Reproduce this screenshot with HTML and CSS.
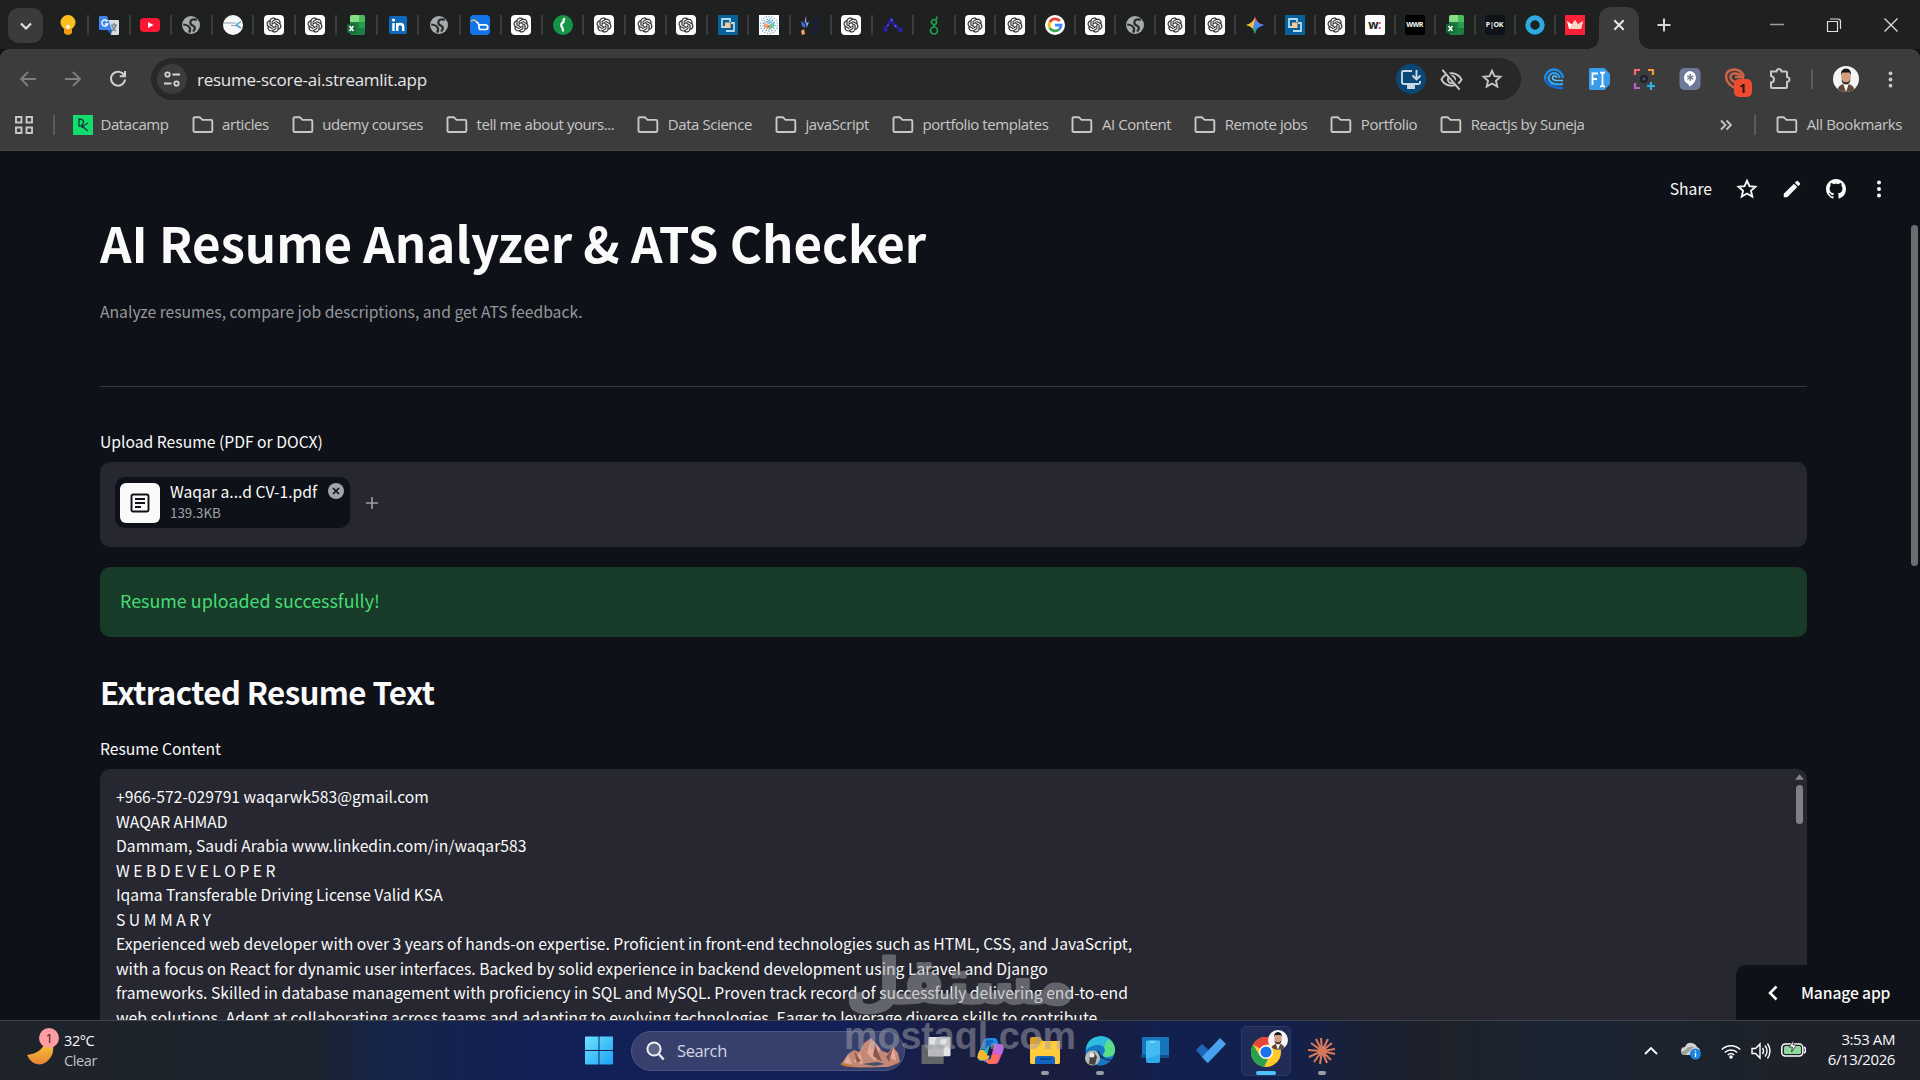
FILE: index.html
```html
<!DOCTYPE html>
<html lang="en">
<head>
<meta charset="utf-8">
<title>AI Resume Analyzer</title>
<link rel="stylesheet" href="styles.css">
</head>
<body>
<svg class="defs" width="0" height="0" aria-hidden="true">
  <defs>
    <symbol id="gpt" viewBox="0 0 20 20"><rect width="20" height="20" rx="4" fill="#fff"/><path transform="translate(2.6 2.6) scale(.617)" fill="#222" stroke="#222" stroke-width=".3" d="M22.2819 9.8211a5.9847 5.9847 0 0 0-.5157-4.9108 6.0462 6.0462 0 0 0-6.5098-2.9A6.0651 6.0651 0 0 0 4.9807 4.1818a5.9847 5.9847 0 0 0-3.9977 2.9 6.0462 6.0462 0 0 0 .7427 7.0966 5.98 5.98 0 0 0 .511 4.9107 6.051 6.051 0 0 0 6.5146 2.9001A5.9847 5.9847 0 0 0 13.2599 24a6.0557 6.0557 0 0 0 5.7718-4.2058 5.9894 5.9894 0 0 0 3.9977-2.9001 6.0557 6.0557 0 0 0-.7475-7.0729zm-9.022 12.6081a4.4755 4.4755 0 0 1-2.8764-1.0408l.1419-.0804 4.7783-2.7582a.7948.7948 0 0 0 .3927-.6813v-6.7369l2.02 1.1686a.071.071 0 0 1 .038.052v5.5826a4.504 4.504 0 0 1-4.4945 4.4944zm-9.6607-4.1254a4.4708 4.4708 0 0 1-.5346-3.0137l.142.0852 4.783 2.7582a.7712.7712 0 0 0 .7806 0l5.8428-3.3685v2.3324a.0804.0804 0 0 1-.0332.0615L9.74 19.9502a4.4992 4.4992 0 0 1-6.1408-1.6464zM2.3408 7.8956a4.485 4.485 0 0 1 2.3655-1.9728V11.6a.7664.7664 0 0 0 .3879.6765l5.8144 3.3543-2.0201 1.1685a.0757.0757 0 0 1-.071 0l-4.8303-2.7865A4.504 4.504 0 0 1 2.3408 7.872zm16.5963 3.8558L13.1038 8.364 15.1192 7.2a.0757.0757 0 0 1 .071 0l4.8303 2.7913a4.4944 4.4944 0 0 1-.6765 8.1042v-5.6772a.79.79 0 0 0-.407-.667zm2.0107-3.0231l-.142-.0852-4.7735-2.7818a.7759.7759 0 0 0-.7854 0L9.409 9.2297V6.8974a.0662.0662 0 0 1 .0284-.0615l4.8303-2.7866a4.4992 4.4992 0 0 1 6.6802 4.66zM8.3065 12.863l-2.02-1.1638a.0804.0804 0 0 1-.038-.0567V6.0742a4.4992 4.4992 0 0 1 7.3757-3.4537l-.142.0805L8.704 5.459a.7948.7948 0 0 0-.3927.6813zm1.0976-2.3654l2.602-1.4998 2.6069 1.4998v2.9994l-2.5974 1.4997-2.6067-1.4997Z"/></symbol>
    <symbol id="globe" viewBox="0 0 20 20"><circle cx="10" cy="10" r="9" fill="#a8abad"/><path d="M16 4.800Q10.500 3.500 9.500 6.500t3 4.500q3 2-.5 5.500M2.200 9.500Q7 10 8.500 12.500t-.5 5" fill="none" stroke="#2a2c2b" stroke-width="2.200"/></symbol>
    <symbol id="excel" viewBox="0 0 20 20"><rect x="4" y="0" width="15" height="20" rx="2" fill="#1b7f42"/><path d="M6 0h7v7H4V2q0-2 2-2" fill="#86dd84"/><path d="M13 0h4q2 0 2 2v5h-6z" fill="#4cbb5e"/><path d="M13 7h6v6h-6z" fill="#269c4d"/><rect x="1" y="9" width="9" height="9" rx="1.500" fill="#146b35"/><path d="M3.500 11l4 5m0-5l-4 5" stroke="#fff" stroke-width="1.600"/></symbol>
    <symbol id="squares" viewBox="0 0 20 20"><rect width="20" height="20" fill="#07629c"/><path d="M9 12H4V4h8v3M8 16h8V8h-3" fill="none" stroke="#b5d9ed" stroke-width="1.800"/><rect x="7" y="7.500" width="5.500" height="5.500" fill="#ffc894"/></symbol>
    <symbol id="folder" viewBox="0 0 22 18"><path d="M1.500 14.500V2.500q0-1.300 1.300-1.300h5l2.700 2.700h8.500q1.300 0 1.300 1.300v9.500q0 1.300-1.300 1.300H2.800q-1.300 0-1.300-1.500z" fill="none" stroke="#c7c7c7" stroke-width="1.900"/></symbol>
    <symbol id="star" viewBox="0 0 24 24"><path d="M12 3l2.700 6 6.500.6-4.900 4.300 1.500 6.400-5.800-3.400-5.800 3.400 1.500-6.400L2.800 9.600l6.500-.6z" fill="none" stroke="currentColor" stroke-width="2" stroke-linejoin="miter"/></symbol>
    <symbol id="dots" viewBox="0 0 20 20"><g fill="currentColor"><circle cx="10" cy="3.500" r="2"/><circle cx="10" cy="10" r="2"/><circle cx="10" cy="16.500" r="2"/></g></symbol>
    <symbol id="face" viewBox="0 0 26 26"><clipPath id="fc"><circle cx="13" cy="13" r="13"/></clipPath><g clip-path="url(#fc)"><rect width="26" height="26" fill="#f5f5f3"/><path d="M4 27q0-8 7-9h4q7 1 7 9z" fill="#62483b"/><path d="M10 17l3 9 3-9z" fill="#fff"/><ellipse cx="13" cy="11" rx="4.800" ry="6.500" fill="#cf9e7d"/><path d="M8 9q-.5-6 5-6.500 5.500.5 5 6.500l-1.500-2.500h-7z" fill="#17171b"/><path d="M8.500 13.500q.5 5 4.500 5t4.500-5q-1.500 2.800-4.500 2.800t-4.500-2.800" fill="#382a28"/></g></symbol>
  </defs>
</svg>

<header class="tabstrip">
  <button class="tab-search"><svg width="14" height="14" viewBox="0 0 14 14"><path d="M2 4.500l5 5 5-5" fill="none" stroke="#e3e3e3" stroke-width="2.200"/></svg></button>
  <div class="tabs wide">
    <i><svg viewBox="0 0 20 20"><path d="M10 0a7.500 7.500 0 0 1 7.500 7.500c0 3-2 4.500-3.500 6.500H6C4.500 12 2.500 10.500 2.500 7.500A7.500 7.500 0 0 1 10 0" fill="#fcc01e"/><path d="M6 13h8v5q-4 4-8 0z" fill="#f39a12"/><circle cx="10" cy="12" r="2.200" fill="#fff4c4"/></svg></i>
    <i><svg viewBox="0 0 20 20"><path d="M8 5h11q1 0 1 1v13q0 1-1 1h-7z" fill="#d9dce1"/><path d="M1 1h7l5 14H1q-1 0-1-1V2q0-1 1-1" fill="#3f86ec"/><path d="M8 15h5l-1 5z" fill="#2756aa"/><path d="M8.500 6.500a3 3 0 1 0 .2 2.500H6" fill="none" stroke="#fff" stroke-width="1.300"/><path d="M12 10h6m-3-2v2m2 0q-1 4-4 6m0-5q2 4 4 5" fill="none" stroke="#6b7483" stroke-width="1.200"/></svg></i>
    <i><svg viewBox="0 0 20 20"><rect y="3" width="20" height="14" rx="4" fill="#ff1633"/><path d="M8 7l5.500 3L8 13z" fill="#fff"/></svg></i>
    <i><svg><use href="#globe"/></svg></i>
    <i><svg viewBox="0 0 20 20"><circle cx="10" cy="10" r="10" fill="#f6f8fa"/><path d="M1 8h12M8 10.500h5" stroke="#8da2b5" stroke-width="1.200"/><path d="M13 10l5-3.500m-5 3.500l5 3" stroke="#4a9fc9" stroke-width="1.500"/></svg></i>
    <i><svg><use href="#gpt"/></svg></i>
    <i><svg><use href="#gpt"/></svg></i>
    <i><svg><use href="#excel"/></svg></i>
    <i><svg viewBox="0 0 20 20"><rect x="1" y="1" width="18" height="18" rx="2" fill="#1268b8"/><path d="M5.500 8v8M9.200 16V8m0 4q0-3 3-3t3 3v4" stroke="#fff" stroke-width="2.400" fill="none"/><circle cx="5.500" cy="5" r="1.600" fill="#fff"/></svg></i>
    <i><svg><use href="#globe"/></svg></i>
    <i><svg viewBox="0 0 20 20"><rect width="20" height="20" rx="4" fill="#1273eb"/><path d="M1 6.500q3-3 5 0" fill="none" stroke="#e7c35f" stroke-width="1.500"/><path d="M6 6.500q2.500 1 3 4v2q0 2 2 2h4.500a2.300 2.300 0 0 0 0-4.600H9" fill="none" stroke="#fff" stroke-width="1.700"/></svg></i>
    <i><svg><use href="#gpt"/></svg></i>
    <i><svg viewBox="0 0 20 20"><circle cx="10" cy="10" r="10" fill="#159447"/><path d="M12 3.500q-2 1-1.500 3.500-3 1.500-2 4.500 2 2 1.500 5" fill="none" stroke="#fff" stroke-width="2.200"/></svg></i>
    <i><svg><use href="#gpt"/></svg></i>
    <i><svg><use href="#gpt"/></svg></i>
    <i><svg><use href="#gpt"/></svg></i>
    <i><svg><use href="#squares"/></svg></i>
    <i><svg viewBox="0 0 20 20"><rect width="20" height="20" fill="#fff"/><g fill="none" stroke-width="1.300" stroke-dasharray="1.300 1.500"><circle cx="10" cy="10" r="8.500" stroke="#7aa9cf"/><circle cx="10" cy="10" r="6" stroke="#5b98c5"/></g><path d="M9.500 10L5 7v5l4.500 3z" fill="#f2a27c"/><path d="M10 10l5-3v5l-5 3z" fill="#6fcb90"/><path d="M6 7l4-2.500L14.500 7 10 9.500z" fill="#8fc4e6"/><path d="M8.500 10.500h2v2h-2z" fill="#e54a4a"/></svg></i>
    <i><svg viewBox="0 0 20 20"><path d="M6 0l-1.500 7 2 2z" fill="#8a90d8"/><path d="M1 6l4 3v4l-3-2z" fill="#466dea"/><path d="M6 8l3-1-2.500 6z" fill="#66c5e8"/><path d="M4 14l1 5-3 1-1-4z" fill="#f4a57a"/><path d="M11 4h8M11 8h8M11 13h8M11 17h8" stroke="#181e3c" stroke-width="2.500"/></svg></i>
    <i><svg><use href="#gpt"/></svg></i>
    <i><svg viewBox="0 0 20 20"><path d="M2 14.500L8 5l4 6 6 4" stroke="#2720ab" stroke-width="2.400" fill="none"/><g fill="#2720ab"><circle cx="2.500" cy="14.500" r="2.200"/><circle cx="8.500" cy="5" r="2.300"/><circle cx="12.500" cy="11" r="2.100"/><circle cx="17.500" cy="15" r="2.300"/></g><g fill="#8f8cf0"><circle cx="5" cy="10.500" r=".7"/><circle cx="8.500" cy="5" r=".8"/><circle cx="12.500" cy="11" r=".7"/></g></svg></i>
    <i><svg viewBox="0 0 20 20"><g fill="none" stroke="#18a252" stroke-width="1.700"><circle cx="10" cy="7" r="2.500"/><circle cx="10" cy="15.500" r="3.500"/><path d="M11.500 5q1.500-1 1.500-3.500M10 9.500V12"/></g></svg></i>
  </div>
  <div class="tabs narrow">
    <i><svg><use href="#gpt"/></svg></i>
    <i><svg><use href="#gpt"/></svg></i>
    <i><svg viewBox="0 0 20 20"><circle cx="10" cy="10" r="10" fill="#fff"/><g fill="none" stroke-width="2.800"><path d="M14.800 6A6 6 0 0 0 4.800 7.200" stroke="#ea4335"/><path d="M4.800 7.200a6 6 0 0 0 0 5.600" stroke="#fbbc05"/><path d="M4.800 12.800a6 6 0 0 0 9.200 1.700" stroke="#34a853"/><path d="M14 14.500a6 6 0 0 0 2-4.300h-6" stroke="#4285f4"/></g></svg></i>
    <i><svg><use href="#gpt"/></svg></i>
    <i><svg><use href="#globe"/></svg></i>
    <i><svg><use href="#gpt"/></svg></i>
    <i><svg><use href="#gpt"/></svg></i>
    <i><svg viewBox="0 0 20 20"><path d="M10 1q1.500 7.500 9 9H1q7.500-1.500 9-9" fill="#ee4d42"/><path d="M10 3v16q-1.500-7.500-9-9 6-1.500 9-7" fill="#f6c13b"/><path d="M10 10v9q1.500-7.500 9-9z" fill="#2e7df2"/><path d="M10 4q2 5 9 6-4 1-6 3H8z" fill="#478bf4"/><path d="M10 19q-1-4-3-6h4z" fill="#32aa5c"/></svg></i>
    <i><svg><use href="#squares"/></svg></i>
    <i><svg><use href="#gpt"/></svg></i>
    <i><b class="fav fav-w">w<em>:</em></b></i>
    <i><b class="fav fav-wwr">WWR</b></i>
    <i><svg><use href="#excel"/></svg></i>
    <i><b class="fav fav-ok">P|OK</b></i>
    <i><svg viewBox="0 0 20 20"><circle cx="10" cy="10" r="7.200" fill="none" stroke="#2caae1" stroke-width="5"/></svg></i>
    <i><svg viewBox="0 0 20 20"><rect width="20" height="20" fill="#fb2138"/><path d="M2 6l5 3.500L10 5l3 4.500L18 6l-2 8H4z" fill="#fff"/><path d="M10 5l3 4.500L18 6l-2 8H4z" fill="#ffd4c2"/></svg></i>
  </div>
  <div class="tab-active"><svg width="14" height="14" viewBox="0 0 14 14"><path d="M2.300 2.300l9.400 9.400m0-9.400l-9.400 9.400" stroke="#e8e8e8" stroke-width="2"/></svg></div>
  <svg class="newtab" viewBox="0 0 14 14"><path d="M7 .5v13M.5 7h13" stroke="#d5d5d5" stroke-width="2"/></svg>
  <div class="winbtns">
    <svg viewBox="0 0 16 16"><path d="M1 7.500h14" stroke="#9b9da0" stroke-width="1.500"/></svg>
    <svg viewBox="0 0 16 16"><path d="M1.500 4.500h10v10h-10zM4 2h8q2.500 0 2.500 2.500V12" fill="none" stroke="#dedede" stroke-width="1.200"/></svg>
    <svg viewBox="0 0 16 16"><path d="M1.500 1.500l13 13m0-13l-13 13" stroke="#dedede" stroke-width="1.300"/></svg>
  </div>
</header>

<nav class="toolbar">
  <div class="navbtns">
    <svg viewBox="0 0 20 20"><path d="M18 10H3m7-7l-7 7 7 7" fill="none" stroke="#7f7f7f" stroke-width="1.800"/></svg>
    <svg viewBox="0 0 20 20"><path d="M2 10h15m-7-7l7 7-7 7" fill="none" stroke="#7f7f7f" stroke-width="1.800"/></svg>
    <svg viewBox="0 0 20 20"><path d="M16.500 7A7 7 0 1 0 17 10.500M17 2v5.300h-5.300" fill="none" stroke="#cfcfcf" stroke-width="2"/></svg>
  </div>
  <div class="omnibox">
    <span class="site"><svg width="18" height="18" viewBox="0 0 18 18"><g fill="none" stroke="#d5d5d5" stroke-width="1.800"><circle cx="4.500" cy="4.500" r="2.200"/><path d="M9.500 4.500H17M1 13.500h7.500"/><circle cx="13.500" cy="13.500" r="2.200"/></g></svg></span>
    <span class="url">resume-score-ai.streamlit.app</span>
    <span class="install"><svg width="22" height="20" viewBox="0 0 22 20"><path d="M12 2H3.500Q2 2 2 3.500v10Q2 15 3.500 15h15q1.500 0 1.500-1.500V12M8 17h6v2H8zM16.500 1v9m-4-3.500l4 4 4-4" fill="none" stroke="#cbd8e4" stroke-width="1.900"/></svg></span>
    <svg class="eye" viewBox="0 0 24 24"><path d="M1.500 12Q5 5.500 12 5.500T22.500 12Q19 18.500 12 18.500T1.500 12z" fill="none" stroke="#c7c7c7" stroke-width="2"/><circle cx="12" cy="12" r="3.800" fill="none" stroke="#c7c7c7" stroke-width="2"/><path d="M4.500 1.500l17 20" stroke="#282828" stroke-width="3"/><path d="M2.500 2l18 20.500" stroke="#c7c7c7" stroke-width="2"/></svg>
    <svg class="bstar"><use href="#star"/></svg>
  </div>
  <div class="exts">
    <svg viewBox="0 0 22 22"><g fill="none" stroke-width="2.300"><path d="M20 19.800Q14 20.500 9.500 18.500 2 15.500 2 9.500" stroke="#1668dc"/><path d="M2 11a9 9 0 0 1 18-1" stroke="#1a8df5"/><path d="M20 16q-9 1-12-1.500Q5.500 12 5.500 10a5.600 5.600 0 0 1 11.100 0" stroke="#2ba5f7"/><path d="M20 12.500h-7q-3.500-.5-3.500-2.500a2 2 0 0 1 4 0" stroke="#5ac5fb" stroke-width="1.600"/></g></svg>
    <svg viewBox="0 0 22 22"><path d="M2.500 0h14L22 6v10l-5.500 6h-14Q1 22 1 20.500v-19Q1 0 2.500 0" fill="#3a9de9"/><path d="M4.500 17V5.500H10M4.500 11H9M12 4.500q2 0 2.500 1 .5-1 2.500-1m-2.500 1v12m-2.500 1q2 0 2.500-1 .5 1 2.500 1" fill="none" stroke="#fff" stroke-width="1.800"/></svg>
    <svg viewBox="0 0 22 22"><g fill="none" stroke-width="2.200"><path d="M2 7V2h5" stroke="#ff6573"/><path d="M15 2h5v5" stroke="#f49a37"/><path d="M2 15v5h5" stroke="#bd5bd5"/><path d="M18 14v8m-4-4h8" stroke="#25b2e6"/></g><circle cx="11" cy="11" r="4" fill="#20212a"/><circle cx="11" cy="11" r="1.500" fill="#435a8a"/></svg>
    <svg viewBox="0 0 22 22"><rect x=".5" width="21" height="22" rx="5" fill="#6e7998"/><path d="M11 3a6.500 6.500 0 0 1 6 7q-.5 5-6.500 8.500Q9.500 15.500 7 14.500 5 13 5 9.500 5.500 4 11 3" fill="#fff"/><path d="M11.300 6v7M8.300 7.800l6 3.400m0-3.400l-6 3.400" stroke="#6e7998" stroke-width="1.400"/></svg>
    <span class="ext-badge"><svg viewBox="0 0 22 22"><path d="M20 8Q17 1.500 10 1.500 2 2 2 9q.5 8 12 12M17 8q-2-3-7-2.500-4 .5-3.500 4T15 16M11 9h8v3" fill="none" stroke="#cf6249" stroke-width="2.500"/></svg><b>1</b></span>
    <svg viewBox="0 0 22 22"><path d="M2 3.500h5.500Q8 1 10 1t2.500 2.500H17q1 0 1 1V9q2.500.5 2.500 2.500T18 14v5q0 1-1 1H3q-1 0-1-1v-4.500q3 0 3-3T2 8z" fill="none" stroke="#c7c7c7" stroke-width="2"/></svg>
  </div>
  <span class="vbar"></span>
  <svg class="avatar"><use href="#face"/></svg>
  <svg class="menu"><use href="#dots"/></svg>
</nav>

<nav class="bookmarks">
  <svg class="apps" viewBox="0 0 18 18"><path d="M1 1h5.500v5.500H1zM11.500 1H17v5.500h-5.500zM1 11.500h5.500V17H1zM11.500 11.500H17V17h-5.500z" fill="none" stroke="#c7c7c7" stroke-width="1.900"/></svg>
  <span class="vbar"></span>
  <ul>
    <li><svg class="dc" viewBox="0 0 20 20"><rect width="20" height="20" fill="#10dd6e"/><path d="M6 11.500V4q4.500 0 4.500 3T6 11.500M15 8l-5.500 3.500L15 16M9 9v4" fill="none" stroke="#123c35" stroke-width="1.300"/></svg>Datacamp</li>
    <li><svg><use href="#folder"/></svg>articles</li>
    <li><svg><use href="#folder"/></svg>udemy courses</li>
    <li><svg><use href="#folder"/></svg>tell me about yours...</li>
    <li><svg><use href="#folder"/></svg>Data Science</li>
    <li><svg><use href="#folder"/></svg>javaScript</li>
    <li><svg><use href="#folder"/></svg>portfolio templates</li>
    <li><svg><use href="#folder"/></svg>AI Content</li>
    <li><svg><use href="#folder"/></svg>Remote jobs</li>
    <li><svg><use href="#folder"/></svg>Portfolio</li>
    <li><svg><use href="#folder"/></svg>Reactjs by Suneja</li>
  </ul>
  <svg class="more" viewBox="0 0 12 12"><path d="M1 1.500L5.500 6 1 10.500M6.500 1.500L11 6l-4.500 4.500" fill="none" stroke="#c7c7c7" stroke-width="1.800"/></svg>
  <span class="vbar"></span>
  <div class="allbm"><svg><use href="#folder"/></svg>All Bookmarks</div>
</nav>

<main class="page">
  <div class="apphead">
    <span>Share</span>
    <svg><use href="#star"/></svg>
    <svg viewBox="0 0 24 24"><path d="M3 17.200V21h3.800L17.800 9.900l-3.700-3.700zM20.700 7a1 1 0 0 0 0-1.400l-2.300-2.300a1 1 0 0 0-1.400 0l-1.900 1.800 3.800 3.800z" fill="currentColor"/></svg>
    <svg viewBox="0 0 16 16"><path d="M8 0C3.580 0 0 3.580 0 8c0 3.540 2.290 6.530 5.470 7.590.4.070.55-.17.55-.38 0-.19-.01-.82-.01-1.490-2.010.37-2.530-.49-2.690-.94-.09-.23-.48-.94-.82-1.130-.28-.15-.68-.52-.01-.53.63-.01 1.080.58 1.230.82.72 1.210 1.870.87 2.330.66.070-.52.280-.87.510-1.070-1.780-.2-3.640-.89-3.640-3.950 0-.87.310-1.590.82-2.150-.08-.2-.36-1.020.08-2.120 0 0 .67-.21 2.200.82.64-.18 1.320-.27 2-.27s1.360.09 2 .27c1.530-1.040 2.200-.82 2.200-.82.44 1.100.16 1.920.08 2.120.51.56.82 1.270.82 2.150 0 3.070-1.870 3.750-3.650 3.950.29.25.54.73.54 1.480 0 1.070-.01 1.930-.01 2.200 0 .21.150.46.550.38A8.010 8.010 0 0 0 16 8c0-4.420-3.580-8-8-8z" fill="currentColor"/></svg>
    <svg><use href="#dots"/></svg>
  </div>
  <h1>AI Resume Analyzer &amp; ATS Checker</h1>
  <p class="caption">Analyze resumes, compare job descriptions, and get ATS feedback.</p>
  <hr>
  <label class="upl">Upload Resume (PDF or DOCX)</label>
  <section class="uploader">
    <div class="file">
      <span class="fileicon"><svg width="20" height="20" viewBox="0 0 20 20"><rect x="1.500" y="1.500" width="17" height="17" rx="1.500" fill="none" stroke="#0e1117" stroke-width="1.900"/><path d="M5 6h10M5 10h10M5 14h6" stroke="#0e1117" stroke-width="1.900"/></svg></span>
      <span class="meta"><span class="fname">Waqar a...d CV-1.pdf</span><span class="fsize">139.3KB</span></span>
      <svg class="del" viewBox="0 0 16 16"><circle cx="8" cy="8" r="8" fill="#a3a4a8"/><path d="M5 5l6 6m0-6l-6 6" stroke="#0e1117" stroke-width="1.700"/></svg>
    </div>
    <svg class="add" viewBox="0 0 14 14"><path d="M7 1v12M1 7h12" stroke="#a0a1a6" stroke-width="1.600"/></svg>
  </section>
  <div class="alert">Resume uploaded successfully!</div>
  <h2>Extracted Resume Text</h2>
  <label class="rc">Resume Content</label>
  <section class="content">
    <p>+966-572-029791 waqarwk583@gmail.com</p>
    <p>WAQAR AHMAD</p>
    <p>Dammam, Saudi Arabia www.linkedin.com/in/waqar583</p>
    <p>W E B D E V E L O P E R</p>
    <p>Iqama Transferable Driving License Valid KSA</p>
    <p>S U M M A R Y</p>
    <p>Experienced web developer with over 3 years of hands-on expertise. Proficient in front-end technologies such as HTML, CSS, and JavaScript,</p>
    <p>with a focus on React for dynamic user interfaces. Backed by solid experience in backend development using Laravel and Django</p>
    <p>frameworks. Skilled in database management with proficiency in SQL and MySQL. Proven track record of successfully delivering end-to-end</p>
    <p>web solutions. Adept at collaborating across teams and adapting to evolving technologies. Eager to leverage diverse skills to contribute</p>
    <svg class="uparrow" viewBox="0 0 10 6"><path d="M5 0l5 6H0z" fill="#848589"/></svg>
    <span class="thumb"></span>
  </section>
  <span class="pagethumb"></span>
  <div class="manage"><svg width="10" height="16" viewBox="0 0 10 16"><path d="M8.500 1.500L2 8l6.500 6.500" fill="none" stroke="#fff" stroke-width="2.500"/></svg><span>Manage app</span></div>
</main>

<footer class="taskbar">
  <div class="weather">
    <span class="moon"><svg viewBox="0 0 28 28"><defs><linearGradient id="mg" x2="0" y2="1"><stop offset="0" stop-color="#f8cd2e"/><stop offset="1" stop-color="#e8813a"/></linearGradient></defs><path d="M19 4Q16 15 1 17q4 9 12 9.500Q22 26 26.500 16 28 10 27 4z" fill="url(#mg)"/></svg><b>1</b></span>
    <span class="wtext"><span>32°C</span><span class="dim">Clear</span></span>
  </div>
  <div class="dock">
    <svg class="start" viewBox="0 0 29 29"><defs><linearGradient id="wg" x2="1" y2="1"><stop offset="0" stop-color="#6be5ff"/><stop offset="1" stop-color="#1e9ff5"/></linearGradient></defs><path d="M0 1q0-1 1-1h13v14H0zM15 0h13q1 0 1 1v13H15zM0 15h14v14H1q-1 0-1-1zM15 15h14v13q0 1-1 1H15z" fill="url(#wg)"/></svg>
    <div class="search">
      <svg width="19" height="20" viewBox="0 0 19 20"><circle cx="8" cy="8" r="6.600" fill="#596487" stroke="#eceef4" stroke-width="2"/><path d="M12.700 13l5 5.500" stroke="#eceef4" stroke-width="2.300"/></svg>
      <span>Search</span>
      <svg class="hill" viewBox="0 0 60 30"><path d="M0 26q8-5 30-4t30 1q-3 6-30 6.500T0 26" fill="#bd7a33"/><path d="M2 25l6-9 6-4 5 2 5-9 7-5 5 5 6 8 6 2 5-6 5 6 2 9-12 5H16z" fill="#c48876"/><path d="M8 17l4 9-8-1zM20 14l3 12-9-2zM31 1l-4 14 8 8 5-12zM54 10l-5 9 7 4z" fill="#e5aa95"/><path d="M35 6l-2 12 9 6-4-10zM14 13l3 12 4-2zM53 10l-7 9 3 5z" fill="#8b5750"/><path d="M22 26l15-2 8 2-10 2z" fill="#43546a"/></svg>
    </div>
    <svg class="tview" viewBox="0 0 30 30"><rect x="0" y="9" width="23" height="20" rx="1" fill="#626468"/><rect x="7" y="1" width="23" height="20" rx="1" fill="#e2e3e5"/><path d="M7 9h16v12H7z" fill="#b7b9bd"/></svg>
    <svg class="copilot" viewBox="0 0 28 28"><path d="M8 3q1-2 4-2h6q3 0 4 4l1 3h-6L13 22q-1 3-5 3" fill="#1b8de5"/><path d="M8 3L2 17q-2 7 4 7h3q3 0 4-4l3-12q1-2-1-2z" fill="#2fb9bc"/><path d="M5 11L2 17q-2 6 4 6h3q3 0 4-4z" fill="#f5b82f"/><path d="M14 8l5-1h5q5 1 3 7l-4 10q-1 3-4 3h-5q-4 0-5-5l4 1q2-1 2-3l3-11z" fill="#e9599a"/><path d="M9 22l5 1 2-5h7l-3 8-5 1q-5 0-6-5" fill="#ff7154"/><path d="M19 7h5q5 1 3 7l-1 3h-8z" fill="#b76ae3"/><path d="M9 3h8l1 6h-6l-3 4H4z" fill="#1369c7"/><path d="M13.500 9.500h3.500l-2.500 9h-3.500z" fill="#171d48"/></svg>
    <span class="app"><svg class="files" viewBox="0 0 30 27"><path d="M0 2q0-2 2-2h8l3 4h15q2 0 2 2v19q0 2-2 2H2q-2 0-2-2z" fill="#e1a022"/><path d="M0 7h8l4-3h18v21q0 2-2 2H2q-2 0-2-2z" fill="#ffcb3c"/><path d="M5 27v-5q0-3 3-3h14q3 0 3 3v5z" fill="#1266c1"/><path d="M10 22h11" stroke="#0a4889" stroke-width="2"/></svg></span>
    <span class="app"><svg class="edge" viewBox="0 0 30 30"><circle cx="15" cy="15" r="14.500" fill="#1679c7"/><path d="M1 14Q2 1 16 0q13 1 14 14 0 7-8 7-4 0-4-3 2-1 2-4-1-5-7-5-7 0-12 5" fill="#30bddd"/><path d="M23 3q7 4 7 11 0 7-8 7-4 0-4-3 2-1 2-4 0-2-1-3z" fill="#5bdd86"/><path d="M13 14q-2 9 13 11 2-1 2-2-10 3-15-9" fill="#15264f"/><circle cx="7.500" cy="22" r="7.500" fill="#bbb9b6"/><path d="M4 28l1-8 4-4 3 5-2 8z" fill="#454543"/><circle cx="7" cy="19" r="2.500" fill="#e9e8e6"/></svg></span>
    <svg class="phone" viewBox="0 0 28 27"><rect x="1" width="27" height="20" rx="1" fill="#1675bb"/><path d="M0 18h28v3H0z" fill="#124f84"/><rect x="5" y="3" width="14" height="23" rx="2" fill="#30a9ea"/><path d="M5 4h14v13l-14 5z" fill="#42bcf2"/><path d="M9 5h5" stroke="#c8ecff"/></svg>
    <svg class="todo" viewBox="0 0 30 26"><path d="M0 12l6-6 11 10-6 9z" fill="#1d67bc"/><path d="M6 19L24 0l6 6-18 19z" fill="#48a2f0"/></svg>
    <span class="app on"><svg class="chrome" viewBox="0 0 30 30"><circle cx="15" cy="15" r="15" fill="#ffc928"/><path d="M15 15L2 7.500A15 15 0 0 1 28 7.500H15z" fill="#e8453c"/><path d="M2 7.500L9 19l8 3-4 8A15 15 0 0 1 2 7.500" fill="#2aa14f"/><circle cx="15" cy="15" r="7" fill="#fff"/><circle cx="15" cy="15" r="5.600" fill="#1a73e8"/></svg><svg class="cface"><use href="#face"/></svg></span>
    <span class="app last"><svg class="claude" viewBox="0 0 28 28"><path d="M14 14L13 1M14 14l6-12M14 14l10-8M14 14l13-2M14 14l13 3M14 14l9 9M14 14l5 12M14 14l-2 13M14 14L6 25M14 14L1 20M14 14L0 13M14 14L3 6M14 14L8 2" stroke="#d8795b" stroke-width="2.100"/></svg></span>
  </div>
  <div class="tray">
    <svg class="up" viewBox="0 0 14 10"><path d="M1 8l6-6 6 6" fill="none" stroke="#fff" stroke-width="1.800"/></svg>
    <svg class="cloud" viewBox="0 0 20 18"><path d="M4 13Q0 13 0 9q0-4 4-4 2-5 7-4 4 1 5 4 3 1 3 4t-4 4z" fill="#d2d2d2"/><path d="M0 9q3 1 5-2t8-2L4 13Q0 13 0 9" fill="#9d9ea0"/><circle cx="14.500" cy="12" r="5.500" fill="#1b82de"/><path d="M14.500 11v4M14.500 8.500v1.300" stroke="#fff" stroke-width="1.400"/></svg>
    <svg class="wifi" viewBox="0 0 20 16"><g fill="none" stroke="#fff" stroke-width="1.500"><path d="M.8 6.500a13 13 0 0 1 18.400 0M3.800 9.500a8.800 8.800 0 0 1 12.400 0M6.800 12a4.800 4.800 0 0 1 6.400 0"/></g><circle cx="10" cy="14" r="1.800" fill="#fff"/></svg>
    <svg class="vol" viewBox="0 0 20 18"><g fill="none" stroke="#fff" stroke-width="1.400"><path d="M1 6.500h3.500L9 2v14l-4.500-4.500H1zM11.500 6q2 3 0 6M14 3.500q4 5.500 0 11M16.500 1.500q5 7.500 0 15"/></g></svg>
    <svg class="batt" viewBox="0 0 25 17"><rect x=".8" y="4" width="21" height="12" rx="3.500" fill="none" stroke="#fff" stroke-width="1.500"/><rect x="3" y="6" width="17" height="8" rx="1.500" fill="#8ed99a"/><path d="M23 7q1.500.5 1.500 3T23 13" stroke="#fff" stroke-width="1.500" fill="none"/><path d="M12.500 0L8 7h3.500l-1 5 5-7H12z" fill="#fff" stroke="#1d222b" stroke-width=".8"/></svg>
    <div class="clock"><span>3:53 AM</span><span>6/13/2026</span></div>
  </div>
</footer>

<svg class="watermark" width="240" height="120" viewBox="0 0 240 120">
  <text class="wm-ar" x="6" y="58" direction="ltr" textLength="228" lengthAdjust="spacingAndGlyphs">مستقل</text>
  <text class="wm-en" x="4" y="104" textLength="232" lengthAdjust="spacingAndGlyphs">mostaql.com</text>
</svg>
</body>
</html>
```
FILE: styles.css
```css
* { box-sizing: border-box; }
body {
  margin: 0; width: 1920px; height: 1080px; overflow: hidden;
  display: flex; flex-direction: column; position: relative;
  background: #0e1117; color: #fafafa;
  font-family: "Noto Sans CJK JP", "Noto Sans CJK SC", sans-serif;
}
svg { display: block; flex: none; }
.defs { position: absolute; }
p, h1, h2, ul { margin: 0; padding: 0; }
button { border: 0; padding: 0; }

/* tab strip */
.tabstrip { flex: none; height: 49px; background: #1f2120; display: flex; align-items: center; }
.tab-search {
  width: 35px; height: 35px; margin: 2px 4px 0 8px; border-radius: 11px; background: #3a3b3b;
  display: flex; align-items: center; justify-content: center;
}
.tabs { display: flex; }
.tabs i {
  width: 41.25px; height: 20px; margin-top: 1px; display: flex; justify-content: center; position: relative; font-style: normal;
}
.tabs.narrow i { width: 40px; }
.tabs i::after { content: ""; position: absolute; right: -1px; top: 0; width: 2px; height: 20px; background: #3b3d3d; }
.tabs.narrow i:last-child::after { display: none; }
.tabs svg { width: 20px; height: 20px; }
.fav { width: 20px; height: 20px; border-radius: 2px; font: bold 12px/19px "Open Sans", sans-serif; text-align: center; overflow: hidden; }
.fav em { font-style: normal; color: #e33; }
.fav-w { background: #fff; color: #222; letter-spacing: -0.5px; }
.fav-wwr { background: #000; font-size: 7px; line-height: 20px; letter-spacing: -0.5px; }
.fav-ok { background: #101219; font-size: 7px; line-height: 20px; letter-spacing: -0.3px; }
.tab-active {
  width: 40px; height: 42px; margin: 7px 0 0 4px; background: #3c3c3c; border-radius: 12px 12px 0 0; position: relative;
  display: flex; align-items: center; justify-content: center; padding-bottom: 6px;
}
.tab-active::before, .tab-active::after { content: ""; position: absolute; bottom: 0; width: 11px; height: 11px; }
.tab-active::before { left: -11px; background: radial-gradient(circle at 0 0, transparent 10.500px, #3c3c3c 11px); }
.tab-active::after { right: -11px; background: radial-gradient(circle at 100% 0, transparent 10.500px, #3c3c3c 11px); }
.newtab { width: 14px; height: 14px; margin: 1px 0 0 18px; }
.winbtns { margin-left: auto; display: flex; gap: 41px; padding-right: 21px; }
.winbtns svg { width: 16px; height: 16px; }

/* toolbar */
.toolbar {
  flex: none; height: 60px; background: #3c3c3c; border-radius: 9px 9px 0 0;
  display: flex; align-items: center;
}
.navbtns { display: flex; gap: 25px; padding-left: 18px; width: 151px; }
.navbtns svg { width: 20px; height: 20px; }
.omnibox { width: 1370px; height: 42px; border-radius: 21px; background: #282828; display: flex; align-items: center; }
.site { width: 30px; height: 30px; margin-left: 6px; border-radius: 50%; background: #3c3c3c; display: flex; align-items: center; justify-content: center; }
.url { margin-left: 10px; margin-top: 1px; color: #e6e6e6; font: 17px/24px "Open Sans", sans-serif; letter-spacing: -0.27px; }
.install { width: 30px; height: 30px; margin-left: auto; border-radius: 50%; background: #0b4774; display: flex; align-items: center; justify-content: center; }
.eye { width: 23px; height: 23px; margin-left: 14px; }
.bstar { width: 22px; height: 22px; margin: 0 18px 0 18px; color: #c7c7c7; }
.exts { display: flex; gap: 23.200px; margin-left: 22px; }
.exts svg { width: 22px; height: 22px; }
.ext-badge { position: relative; }
.ext-badge b {
  position: absolute; left: 10px; top: 11px; width: 18px; height: 18px; border-radius: 5px; background: #f04b31; color: #2a1512;
  font: bold 13px/18px "Open Sans", sans-serif; text-align: center;
}
.vbar { width: 2px; height: 20px; background: #5a5b5b; }
.toolbar .vbar { margin-left: 20px; }
.avatar { width: 26px; height: 26px; margin-left: 20px; }
.menu { width: 19px; height: 19px; margin-left: 22px; color: #c7c7c7; }

/* bookmarks */
.bookmarks {
  flex: none; height: 42px; padding: 0 18px 10px 15px; background: #3c3c3c; border-bottom: 1px solid #464646;
  display: flex; align-items: center; color: #c7c7c7; font: 15px/20px "Open Sans", sans-serif; letter-spacing: -0.43px;
}
.apps { width: 18px; height: 18px; margin-right: 20px; }
.bookmarks ul { display: flex; list-style: none; margin-left: 18px; gap: 23px; }
.bookmarks li, .allbm { display: flex; align-items: center; gap: 8.500px; white-space: nowrap; line-height: 18px; padding-bottom: 1px; }
.bookmarks li svg, .allbm svg { width: 22px; height: 18px; margin-top: 1px; }
.bookmarks li .dc { width: 20px; height: 20px; margin-right: -1px; }
.more { width: 12px; height: 12px; margin-left: auto; margin-right: 22px; }
.allbm { margin-left: 20px; letter-spacing: -0.36px; }

/* streamlit page */
.page { flex: 1; min-height: 0; overflow: hidden; position: relative; padding: 0 113px 0 100px; }
.apphead { height: 60px; padding-top: 16px; margin-right: -82px; display: flex; align-items: center; justify-content: flex-end; gap: 23px; }
.apphead span { font-size: 15.700px; line-height: 24px; margin-right: 1px; }
.apphead svg { width: 22px; height: 22px; }
.apphead svg:nth-of-type(3) { width: 20px; height: 20px; }
.apphead svg:last-child { width: 20px; height: 20px; }
h1 { margin-top: 1px; font-size: 49.200px; font-weight: 700; line-height: 60px; white-space: nowrap; }
.caption { margin-top: 28px; font-size: 15.700px; line-height: 24px; color: #96989c; }
hr { margin: 62px 0 43px; border: 0; height: 1px; background: #36383e; }
label { display: block; height: 24px; margin-bottom: 8px; font-size: 15.700px; line-height: 24px; }
.uploader { height: 85px; padding: 15px; border-radius: 10px; background: #262730; display: flex; align-items: flex-start; }
.file { width: 235px; height: 51px; padding: 0 6px 0 5px; border-radius: 10px; background: #0e1117; display: flex; align-items: center; }
.fileicon { width: 40px; height: 40px; border-radius: 6px; background: #fafafa; display: flex; align-items: center; justify-content: center; }
.meta { display: flex; flex-direction: column; margin-left: 10px; margin-top: -2px; width: 158px; }
.fname { font-size: 15.700px; line-height: 22px; white-space: nowrap; }
.fsize { font-size: 13.400px; line-height: 19px; color: #9fa0a5; }
.del { width: 16px; height: 16px; margin-bottom: 23px; }
.add { width: 14px; height: 14px; margin: 19px 0 0 15px; }
.alert { height: 70px; margin-top: 20px; padding: 20px; border-radius: 10px; background: #183a29; color: #46dc75; font-size: 17.900px; line-height: 27px; }
h2 { margin-top: 35px; height: 40px; font-size: 31.300px; font-weight: 600; line-height: 40px; letter-spacing: -0.62px; }
.rc { margin-top: 25px; }
.content { position: relative; height: 300px; padding: 16px 16px; border-radius: 10px; background: #262730; }
.content p { height: 24.500px; font-size: 15.690px; line-height: 24.500px; white-space: nowrap; }
.uparrow { position: absolute; right: 3px; top: 5px; width: 9px; height: 6px; }
.thumb { position: absolute; right: 4px; top: 16px; width: 7px; height: 39px; border-radius: 4px; background: #7f8084; }
.pagethumb { position: absolute; right: 2px; top: 74px; width: 7px; height: 341px; border-radius: 4px; background: #6b6d70; }
.manage {
  position: absolute; right: 0; bottom: 0; width: 184px; height: 55px; border-radius: 10px 0 0 0; background: #0e1117;
  display: flex; align-items: center; gap: 23px; padding-left: 32px; font-size: 15.700px; font-weight: 500; letter-spacing: -0.15px; white-space: nowrap;
}

/* taskbar */
.taskbar {
  flex: none; height: 60px; border-top: 1px solid #41444b; display: flex; align-items: center; justify-content: space-between; position: relative;
  background: linear-gradient(90deg, #1f232a 0, #1c232d 310px, #162445 370px, #14234c 430px, #131f57 560px, #131f57 850px, #191e40 960px, #191e40 1080px, #12204f 1170px, #13204c 1290px, #1a2031 1370px, #1d212a 1440px, #192431 1560px, #1d2129 1800px, #1e2129 1920px);
  font-family: "Open Sans", sans-serif; font-size: 15px; letter-spacing: -0.4px;
}
.weather { display: flex; width: 300px; padding-left: 26px; gap: 10px; }
.moon { position: relative; width: 28px; height: 40px; }
.moon svg { margin-top: 7px; width: 28px; height: 28px; }
.moon b { position: absolute; left: 13px; top: -3px; width: 20px; height: 20px; border-radius: 50%; background: #ff9ba3; color: #3b1418; font: 13px/20px "Open Sans", sans-serif; text-align: center; }
.wtext { display: flex; flex-direction: column; line-height: 20px; font-size: 14.500px; }
.dim { color: #c0c2c6; }
.dock { position: absolute; left: 585px; top: 0; height: 59px; display: flex; align-items: center; }
.start { width: 28px; height: 29px; }
.search {
  width: 274px; height: 40px; margin-left: 18px; padding: 0 4px 0 14px; border-radius: 20px; background: #37406c; border: 1px solid #4b5683;
  display: flex; align-items: center; color: #d3d6e1; font-size: 16.500px;
}
.search span { margin-left: 12px; }
.hill { width: 60px; height: 30px; margin-left: auto; margin-top: 4px; }
.tview { width: 30px; height: 29px; margin-left: 16px; }
.copilot { width: 28px; height: 28px; margin-left: 25px; }
.app { position: relative; width: 50px; height: 50px; display: flex; align-items: center; justify-content: center; margin-left: 5px; border-radius: 5px; }
.copilot + .app { margin-left: 16px; }
.app::after { content: ""; position: absolute; bottom: 1px; left: 21px; width: 8px; height: 4px; border-radius: 2px; background: #9b9da3; }
.files { width: 30px; height: 27px; }
.edge { width: 30px; height: 30px; }
.phone { width: 28px; height: 27px; margin-left: 16px; }
.todo { width: 30px; height: 26px; margin-left: 27px; }
.app.on { margin-left: 15px; background: #202c57; border: 1px solid #2b3864; }
.app.on::after { left: 14px; bottom: 0; width: 20px; background: #4cc2ff; }
.chrome { width: 30px; height: 30px; margin-top: 2px; }
.cface { position: absolute; right: 2px; top: 3px; width: 20px; height: 20px; }
.app.last { margin-left: 6px; }
.claude { width: 28px; height: 28px; }
.tray { display: flex; align-items: center; margin-right: 25px; }
.up { width: 14px; height: 10px; }
.cloud { width: 20px; height: 18px; margin-left: 23px; }
.wifi { width: 20px; height: 16px; margin-left: 20px; }
.vol { width: 20px; height: 18px; margin-left: 10px; }
.batt { width: 25px; height: 17px; margin-left: 10px; margin-top: -4px; }
.clock { display: flex; flex-direction: column; align-items: flex-end; width: 89px; line-height: 20px; margin-top: -4px; font-size: 15px; letter-spacing: -0.42px; }

/* watermark */
.watermark { position: absolute; left: 840px; top: 945px; overflow: visible; fill: #a0a2a8; opacity: .5; }
.wm-ar { font: bold 62px "DejaVu Sans", sans-serif; stroke: #a0a2a8; stroke-width: 3px; stroke-linejoin: round; }
.wm-en { font: bold 38px "Liberation Sans", sans-serif; }
```
